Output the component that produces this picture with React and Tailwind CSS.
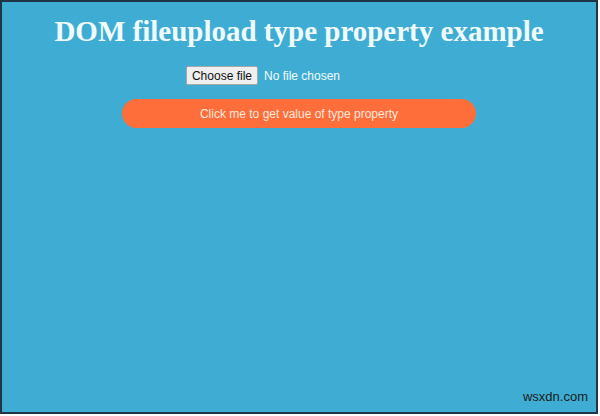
import React from "react";

function App() {
  return (
    <div className="w-[600px] h-[416px] bg-white">
      <div className="relative w-[598px] h-[414px] border-2 border-[#1d3545] bg-[#3fadd3] flex flex-col items-center">
        <h1
          className="mt-[11px] text-[29px] leading-[37px] font-bold text-[#effbfd]"
          style={{ fontFamily: '"Liberation Serif", "Times New Roman", serif' }}
        >
          DOM fileupload type property example
        </h1>
        <div
          className="mt-[16px] ml-[-72px] flex items-center gap-[6px] text-[12px]"
          style={{ fontFamily: '"Liberation Sans", Arial, sans-serif' }}
        >
          <div className="h-[19px] px-[5px] flex items-center bg-[#efefef] border border-[#a8a8a8] rounded-[2px] text-[#111]">
            Choose file
          </div>
          <span className="text-[#f2fbfd]">No file chosen</span>
        </div>
        <button
          className="mt-[14px] w-[354px] h-[29px] rounded-full bg-[#fe6e3b] text-[12px] text-[#fde8de]"
          style={{ fontFamily: '"Liberation Sans", Arial, sans-serif' }}
        >
          Click me to get value of type property
        </button>
        <div
          className="absolute right-[8px] bottom-[6px] text-[13px] text-[#1b1b1b]"
          style={{ fontFamily: '"Liberation Sans", Arial, sans-serif' }}
        >
          wsxdn.com
        </div>
      </div>
    </div>
  );
}

export default App;
